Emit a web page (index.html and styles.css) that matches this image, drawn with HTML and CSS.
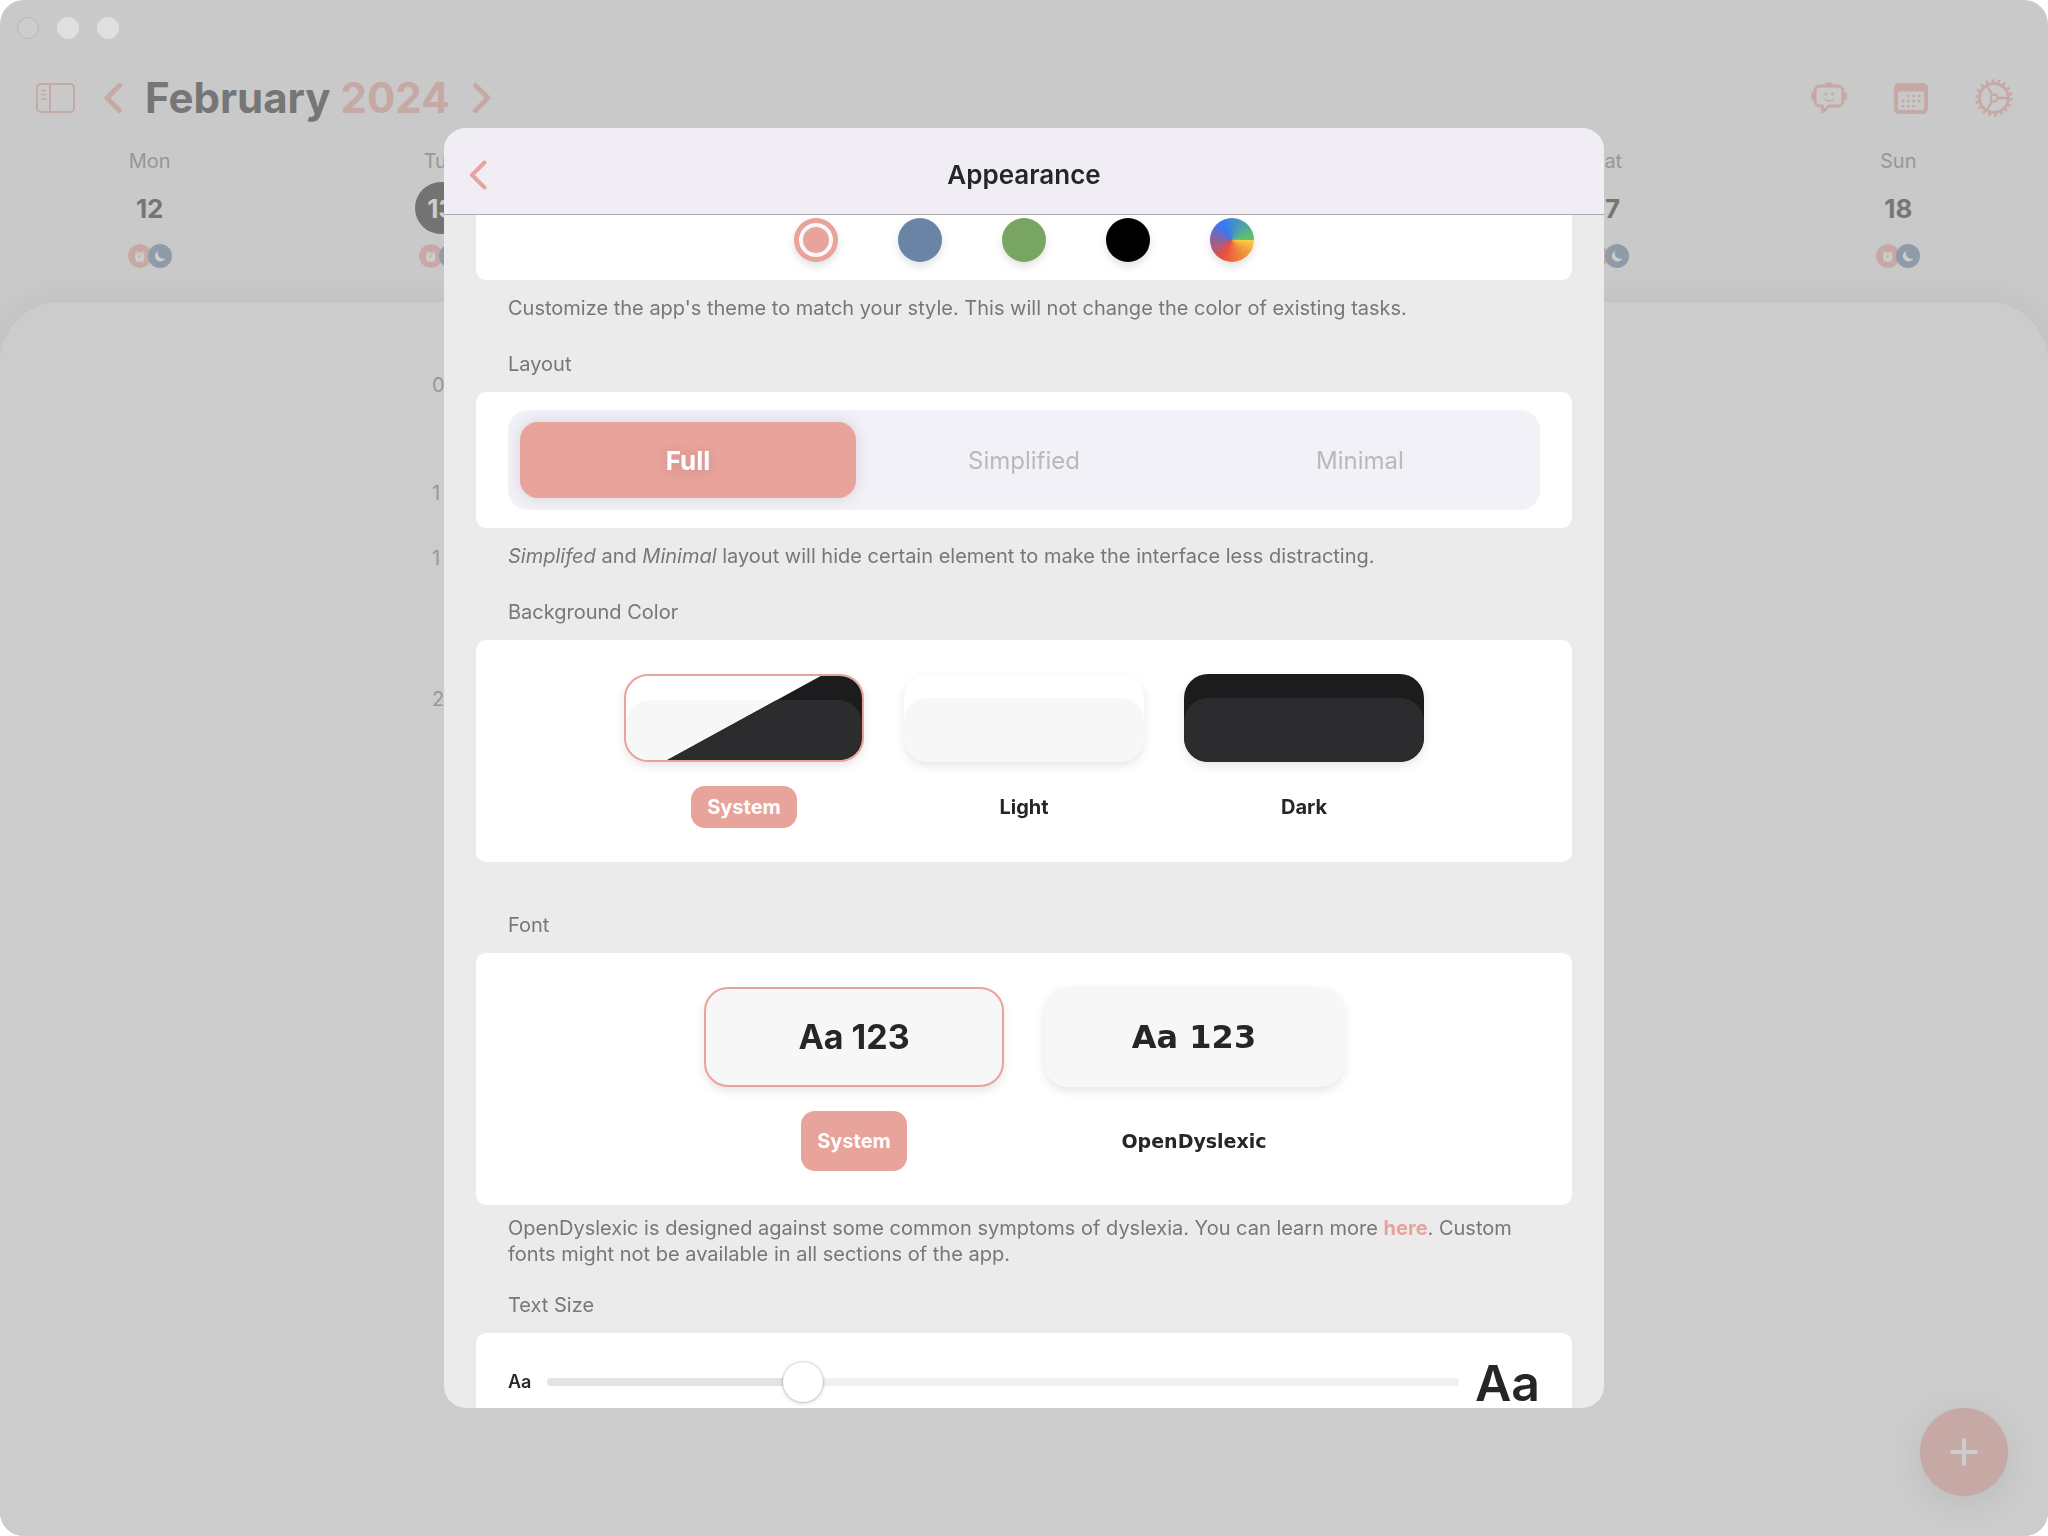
FILE: index.html
```html
<!DOCTYPE html>
<html lang="en">
<head>
<meta charset="utf-8">
<title>Appearance</title>
<meta name="viewport" content="width=device-width, initial-scale=1">
<link rel="stylesheet" href="styles.css">
</head>
<body>
<svg class="sprite" aria-hidden="true">
  <symbol id="chevron-left" viewBox="0 0 18 30"><path d="M15.500 2.500 3 15l12.500 12.500" fill="none" stroke="currentColor" stroke-linecap="round" stroke-linejoin="round"/></symbol>
  <symbol id="chevron-right" viewBox="0 0 18 30"><path d="M2.500 2.500 15 15 2.500 27.500" fill="none" stroke="currentColor" stroke-linecap="round" stroke-linejoin="round"/></symbol>
  <symbol id="alarm" viewBox="0 0 24 24">
    <circle cx="12" cy="12" r="12" fill="#c6a8a5"/>
    <circle cx="11.800" cy="13" r="4.800" fill="#cdcdcd"/>
    <path d="m7.400 8.800 1.200-1.200M16.200 8.800 15 7.600M8.600 16.800l-.6.800M15 16.800l.6.800" stroke="#cdcdcd" stroke-width="1.200" stroke-linecap="round"/>
    <path d="M12 10v3.200H9.600" fill="none" stroke="#c6a8a5" stroke-width="1"/>
  </symbol>
  <symbol id="moon" viewBox="0 0 24 24">
    <circle cx="12" cy="12" r="12" fill="#8f9ba8"/>
    <path d="M10.500 7a5.400 5.400 0 1 0 6.800 7.200 5.200 5.200 0 0 1-6.800-7.200z" fill="#cdcdcd"/>
  </symbol>
</svg>

<div class="window">
  <div class="traffic"><span class="light light-dim"></span><span class="light"></span><span class="light"></span></div>

  <header class="toolbar">
    <button class="icon-button sidebar-button" aria-label="Sidebar">
      <svg width="40" height="32" viewBox="0 0 40 32" fill="none" stroke="currentColor" stroke-width="2"><rect x="2" y="2" width="37" height="28" rx="4"/><path d="M15 2v28"/><path d="M6.500 8.500h4M6.500 12.500h4M6.500 17h4" stroke-linecap="round" stroke-width="1.500"/></svg>
    </button>
    <button class="icon-button" aria-label="Previous"><svg class="chevron" width="18" height="30"><use href="#chevron-left"/></svg></button>
    <h1 class="month">February <span class="year">2024</span></h1>
    <button class="icon-button" aria-label="Next"><svg class="chevron" width="18" height="30"><use href="#chevron-right"/></svg></button>
    <div class="actions">
      <button class="icon-button" aria-label="Assistant">
        <svg width="36" height="34" viewBox="0 0 36 34" fill="none" stroke="currentColor"><path d="M9 5h18a5 5 0 0 1 5 5v10a5 5 0 0 1-5 5h-9l-6.500 6v-6H9a5 5 0 0 1-5-5V10a5 5 0 0 1 5-5z" stroke-width="3" stroke-linejoin="round"/><path d="M14.500 3h7" stroke-width="3"/><path d="M1.500 11.500v7M34.500 11.500v7" stroke-width="3"/><circle cx="14.800" cy="13" r="1.500" fill="currentColor" stroke="none"/><circle cx="21.500" cy="13" r="1.500" fill="currentColor" stroke="none"/><path d="M14.500 18.500c2 2 5.500 2 7.500 0" stroke-width="1.500" stroke-linecap="round"/></svg>
      </button>
      <button class="icon-button" aria-label="Calendar">
        <svg width="34" height="31" viewBox="0 0 34 31"><path fill="currentColor" fill-rule="evenodd" d="M5 0h24a5 5 0 0 1 5 5v21a5 5 0 0 1-5 5H5a5 5 0 0 1-5-5V5a5 5 0 0 1 5-5zM4 10v15a2 2 0 0 0 2 2h22a2 2 0 0 0 2-2V10a1.500 1.500 0 0 0-1.500-1.500h-23A1.500 1.500 0 0 0 4 10z"/><path d="M13 12.700h14M7.600 18h19M7.600 23.300h14" stroke="currentColor" stroke-width="2.600" stroke-dasharray="2.600 2.800" fill="none"/></svg>
      </button>
      <button class="icon-button" aria-label="Settings">
        <svg width="38" height="38" viewBox="0 0 38 38" fill="none" stroke="currentColor"><circle cx="19" cy="19" r="17.200" stroke-width="3" stroke-dasharray="2.600 3.404"/><circle cx="19" cy="19" r="14.500" stroke-width="3"/><circle cx="19" cy="19" r="3.500" stroke-width="2.200"/><path d="M23 19h10M17 15.500 12 7M17 22.500 12 31" stroke-width="2.400"/></svg>
      </button>
    </div>
  </header>

  <section class="week">
    <div class="day mon"><span class="day-name">Mon</span><span class="day-number">12</span><span class="badges"><svg class="badge"><use href="#moon"/></svg><svg class="badge badge-front"><use href="#alarm"/></svg></span></div>
    <div class="day tue"><span class="day-name">Tue</span><span class="day-number today">13</span><span class="badges"><svg class="badge"><use href="#moon"/></svg><svg class="badge badge-front"><use href="#alarm"/></svg></span></div>
    <div class="day sat"><span class="day-name">Sat</span><span class="day-number">17</span><span class="badges"><svg class="badge"><use href="#moon"/></svg><svg class="badge badge-front"><use href="#alarm"/></svg></span></div>
    <div class="day sun"><span class="day-name">Sun</span><span class="day-number">18</span><span class="badges"><svg class="badge"><use href="#moon"/></svg><svg class="badge badge-front"><use href="#alarm"/></svg></span></div>
  </section>

  <main class="timeline">
    <ol class="hours"><li class="hour">0</li><li class="hour">1</li><li class="hour hour-short">1</li><li class="hour hour-long">2</li></ol>
  </main>

  <button class="add" aria-label="Add task"><svg width="30" height="30" viewBox="0 0 30 30"><path d="M15 3v24M3 15h24" stroke="#cdcdcd" stroke-width="4" stroke-linecap="round"/></svg></button>
</div>

<div class="backdrop">
  <div class="sheet" role="dialog" aria-labelledby="sheet-title">
    <header class="sheet-header">
      <button class="icon-button back" aria-label="Back"><svg class="chevron" width="18" height="30"><use href="#chevron-left"/></svg></button>
      <h2 class="sheet-title" id="sheet-title">Appearance</h2>
    </header>

    <div class="sheet-body">
      <div class="card card-scrolled swatches" role="radiogroup" aria-label="Theme color">
        <input class="swatch rose" type="radio" name="theme" aria-label="Rose" checked>
        <input class="swatch blue" type="radio" name="theme" aria-label="Blue">
        <input class="swatch green" type="radio" name="theme" aria-label="Green">
        <input class="swatch black" type="radio" name="theme" aria-label="Black">
        <input class="swatch custom" type="radio" name="theme" aria-label="Custom">
      </div>
      <p class="note">Customize the app's theme to match your style. This will not change the color of existing tasks.</p>

      <h3 class="section-title">Layout</h3>
      <div class="card layout-card">
        <div class="segments" role="radiogroup" aria-label="Layout">
          <label class="segment"><input class="hidden-radio" type="radio" name="layout" checked>Full</label>
          <label class="segment"><input class="hidden-radio" type="radio" name="layout">Simplified</label>
          <label class="segment"><input class="hidden-radio" type="radio" name="layout">Minimal</label>
        </div>
      </div>
      <p class="note"><em>Simplifed</em> and <em>Minimal</em> layout will hide certain element to make the interface less distracting.</p>

      <h3 class="section-title">Background Color</h3>
      <div class="card options" role="radiogroup" aria-label="Background Color">
        <label class="option"><input class="hidden-radio" type="radio" name="background" checked>
          <span class="preview tone tone-light"><span class="tone tone-dark tone-split"></span></span><span class="option-name">System</span></label>
        <label class="option"><input class="hidden-radio" type="radio" name="background">
          <span class="preview tone tone-light"></span><span class="option-name">Light</span></label>
        <label class="option"><input class="hidden-radio" type="radio" name="background">
          <span class="preview tone tone-dark"></span><span class="option-name">Dark</span></label>
      </div>

      <h3 class="section-title section-title-apart">Font</h3>
      <div class="card options font-options" role="radiogroup" aria-label="Font">
        <label class="option"><input class="hidden-radio" type="radio" name="font" checked>
          <span class="preview sample">Aa 123</span><span class="option-name">System</span></label>
        <label class="option dyslexic"><input class="hidden-radio" type="radio" name="font">
          <span class="preview sample">Aa 123</span><span class="option-name">OpenDyslexic</span></label>
      </div>
      <p class="note note-close">OpenDyslexic is designed against some common symptoms of dyslexia. You can learn more <a class="link" href="#">here</a>. Custom fonts might not be available in all sections of the app.</p>

      <h3 class="section-title">Text Size</h3>
      <div class="card size-card">
        <label class="small-a" for="text-size">Aa</label>
        <input class="slider" id="text-size" type="range" min="0" max="100" value="27">
        <span class="large-a">Aa</span>
      </div>
    </div>
  </div>
</div>
</body>
</html>
```
FILE: styles.css
```css
:root {
  --accent: #e8a39b;
  --accent-dim: #c6a8a5;
  --ink: #262626;
  --ink-dim: #767676;
}

*, *::before { box-sizing: border-box; }

body {
  margin: 0;
  background: #fff;
  color: var(--ink);
  font-family: Inter, "Liberation Sans", sans-serif;
  font-size: 20px;
  line-height: 26px;
}

h1, h2, h3, p, ol { margin: 0; padding: 0; font-weight: inherit; font-size: inherit; }

.sprite { display: none; }

.icon-button {
  display: flex;
  align-items: center;
  padding: 0;
  border: 0;
  background: none;
  color: var(--accent-dim);
}

.chevron { stroke-width: 5px; }

/* Planner window */
.window {
  display: flex;
  flex-direction: column;
  min-height: 100vh;
  border-radius: 24px;
  overflow: hidden;
  background: #c9c9c9;
  position: relative;
}

.traffic { display: flex; gap: 18px; padding: 17px 17px 0; }

.light {
  width: 22px;
  height: 22px;
  border-radius: 50%;
  background: #dfdfdf;
}

.light-dim { background: #cdcdcd; border: 1px solid #b8b8b8; }

.toolbar {
  display: flex;
  align-items: center;
  height: 60px;
  margin-top: 29px;
  padding: 0 35px;
}

.sidebar-button { margin-right: 29px; }

.month {
  margin: 0 23px;
  font-size: 42px;
  line-height: 60px;
  font-weight: 700;
  color: var(--ink-dim);
}

.year { color: var(--accent-dim); }

.actions { display: flex; align-items: center; gap: 47px; margin-left: auto; }

.week {
  display: grid;
  grid-template-columns: repeat(7, 1fr);
  height: 174px;
  padding: 20px 4px 0;
}

.day { display: flex; flex-direction: column; align-items: center; }
.mon { grid-column: 1; }
.tue { grid-column: 2; }
.sat { grid-column: 6; }
.sun { grid-column: 7; }

.day-name { color: #979797; }

.day-number {
  width: 52px;
  height: 52px;
  margin: 8px 0 10px;
  border-radius: 50%;
  font-size: 26px;
  line-height: 54px;
  font-weight: 700;
  text-align: center;
  color: var(--ink-dim);
}

.today { background: #737373; color: #cdcdcd; }

.badges { display: flex; flex-direction: row-reverse; }
.badge { width: 24px; height: 24px; }
.badge-front { margin-right: -4px; border-radius: 50%; box-shadow: 0 0 0 2px #c9c9c9; }

.timeline {
  flex: 1;
  border-radius: 60px 60px 0 0;
  background: #cccccc;
  box-shadow: 0 0 32px rgba(0, 0, 0, 0.06);
}

.hours { padding: 70px 0 0 432px; list-style: none; color: #979797; }
.hour { height: 108px; }
.hour-short { height: 141px; margin-top: -43px; }

.add {
  position: absolute;
  right: 40px;
  bottom: 40px;
  display: grid;
  place-items: center;
  width: 88px;
  height: 88px;
  border: 0;
  border-radius: 50%;
  background: var(--accent-dim);
  box-shadow: 0 8px 32px rgba(0, 0, 0, 0.08);
}

/* Settings sheet */
.backdrop {
  position: fixed;
  inset: 0;
  display: flex;
  align-items: center;
  justify-content: center;
}

.sheet {
  display: flex;
  flex-direction: column;
  width: 90vw;
  max-width: 1160px;
  height: 90vh;
  max-height: 1280px;
  border-radius: 22px;
  overflow: hidden;
  background: #ebebeb;
}

.sheet-header {
  display: grid;
  grid-template-columns: 60px 1fr 60px;
  flex: none;
  align-items: center;
  height: 87px;
  padding-top: 7px;
  border-bottom: 1px solid #aba7ab;
  background: #f0eef4;
}

.back { padding-left: 25px; color: var(--accent); }
.back .chevron { stroke-width: 4px; }

.sheet-title { font-size: 26px; font-weight: 600; text-align: center; }

.sheet-body { flex: 1; overflow: hidden; padding: 0 32px; }

.card { border-radius: 10px; background: #fff; }
.card-scrolled { border-radius: 0 0 10px 10px; }

.note { padding: 15px 32px 30px; color: #777; }
.note-close { padding: 10px 32px 25px; }
.section-title { padding: 0 32px 15px; color: #777; }
.section-title-apart { padding-top: 50px; }

.link { color: var(--accent); font-weight: 700; text-decoration: none; }

.swatches { display: flex; justify-content: center; gap: 60px; padding: 3px 0 18px; }

.swatch {
  appearance: none;
  display: grid;
  place-items: center;
  width: 44px;
  height: 44px;
  margin: 0;
  border-radius: 50%;
  box-shadow: 0 4px 10px rgba(0, 0, 0, 0.12);
}

.swatch:checked::before {
  content: "";
  width: 34px;
  height: 34px;
  border: 4px solid #f8f8f8;
  border-radius: 50%;
}

.rose { background: var(--accent); }
.blue { background: #6984a5; }
.green { background: #78a662; }
.black { background: #000; }
.custom { background: conic-gradient(from 90deg, #f8ce46, #f19a3e 40deg, #eb4e3d 118deg, #3478f6 238deg, #65c466); }

.hidden-radio { position: absolute; opacity: 0; pointer-events: none; }

.layout-card { padding: 18px 32px; }

.segments {
  display: grid;
  grid-template-columns: repeat(3, 1fr);
  padding: 12px;
  border-radius: 20px;
  overflow: hidden;
  background: #f2f1f7;
}

.segment {
  padding-top: 2px;
  border-radius: 18px;
  font-size: 24px;
  line-height: 74px;
  text-align: center;
  color: #b9b8bd;
}

.segment:has(:checked) {
  background: var(--accent);
  box-shadow: 0 0 16px rgba(0, 0, 0, 0.12);
  color: #fff;
  font-size: 26px;
  font-weight: 700;
  text-shadow: 0 2px 16px rgba(0, 0, 0, 0.15);
}

.options { display: flex; justify-content: center; gap: 40px; padding: 34px 0; }

.option {
  display: flex;
  flex-direction: column;
  align-items: center;
  gap: 24px;
  width: 240px;
}

.preview {
  width: 100%;
  height: 88px;
  border-radius: 24px;
  box-shadow: 0 4px 10px rgba(0, 0, 0, 0.1);
}

.tone { display: grid; overflow: hidden; }
.tone::before { content: ""; grid-area: 1 / 1; margin-top: 24px; border-radius: 24px; }
.tone-light { background: #fff; }
.tone-light::before { background: #f7f7f7; }
.tone-dark { background: #1c1c1e; }
.tone-dark::before { background: #2c2c2e; }
.tone-split { grid-area: 1 / 1; clip-path: polygon(82.5% 0, 100% 0, 100% 100%, 17.5% 100%); }

.hidden-radio:checked + .preview { border: 2px solid var(--accent); }

.option-name {
  padding: 8px 16px;
  border-radius: 14px;
  font-weight: 700;
}

.hidden-radio:checked ~ .option-name { background: var(--accent); color: #fff; }

.font-options .option { width: 300px; }
.font-options .option-name { padding: 17px 16px; }
.sample {
  display: grid;
  place-items: center;
  height: 100px;
  background: #f7f7f7;
  font-size: 34px;
  line-height: 40px;
  font-weight: 700;
}

.dyslexic { font-family: "DejaVu Sans", sans-serif; }
.dyslexic .sample { font-size: 32px; }
.dyslexic .option-name { font-size: 19px; }

.size-card {
  display: flex;
  align-items: center;
  gap: 16px;
  height: 130px;
  padding: 0 32px 32px;
}

.small-a { font-size: 18px; font-weight: 600; }
.large-a { margin-top: 2px; font-size: 50px; line-height: 50px; font-weight: 600; }

.slider {
  appearance: none;
  flex: 1;
  min-width: 0;
  height: 40px;
  margin: 0;
  background: none;
}

.slider::-webkit-slider-runnable-track {
  height: 8px;
  border-radius: 4px;
  background: linear-gradient(90deg, #e3e3e3 28%, #f0f0f0 28%);
}

.slider::-webkit-slider-thumb {
  appearance: none;
  width: 40px;
  height: 40px;
  margin-top: -16px;
  border-radius: 50%;
  background: #fff;
  box-shadow: 0 0 2px rgba(0, 0, 0, 0.3), 0 1px 4px rgba(0, 0, 0, 0.2);
}
```
